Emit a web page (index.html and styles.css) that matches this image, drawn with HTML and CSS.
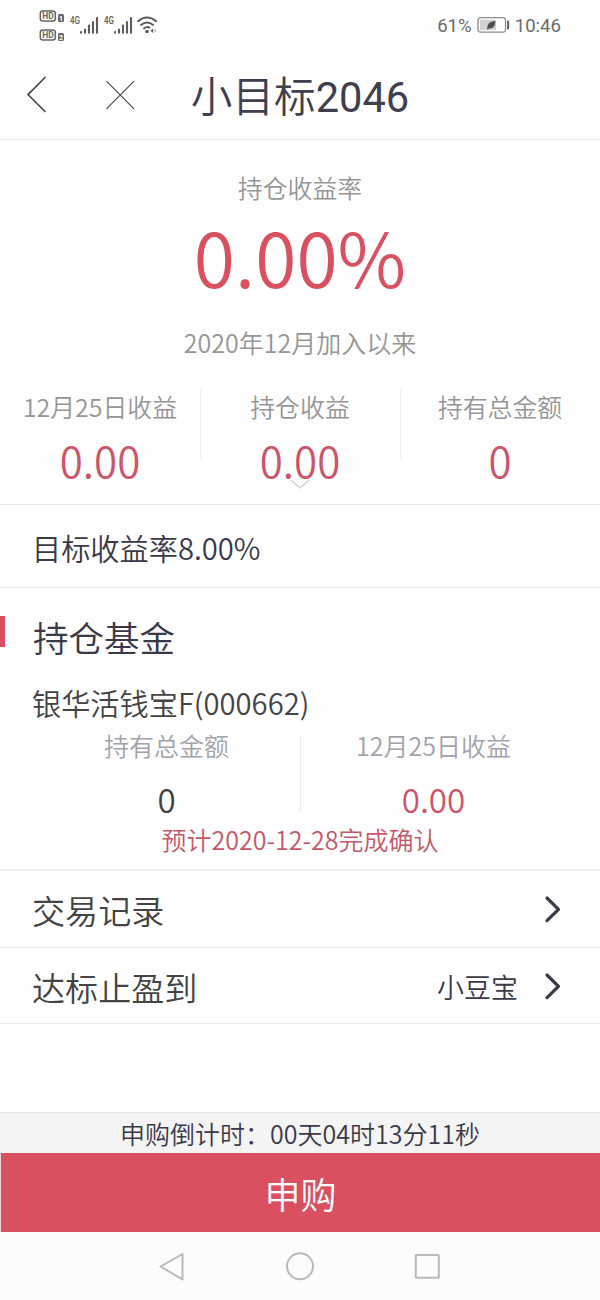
FILE: index.html
```html
<!DOCTYPE html>
<html lang="zh-CN">
<head>
<meta charset="utf-8">
<title>小目标2046</title>
<link rel="stylesheet" href="styles.css">
</head>
<body>
<div class="screen">
  <div class="status">
    <svg class="status-icons" width="122" height="34" viewBox="38 8 122 34">
      <g fill="none" stroke="#666" stroke-width="1.5">
        <rect x="40.3" y="11" width="15" height="10" rx="2.5"/>
        <rect x="40.3" y="30" width="15" height="10" rx="2.5"/>
      </g>
      <g fill="#666">
        <rect x="58" y="14" width="6" height="8" rx="1.5"/>
        <rect x="58" y="33" width="6" height="8" rx="1.5"/>
      </g>
      <g class="tiny">
        <text x="42.2" y="19.2" textLength="11.5">HD</text>
        <text x="42.2" y="38.2" textLength="11.5">HD</text>
        <text class="inverse" x="59" y="20.6">1</text>
        <text class="inverse" x="59" y="39.6">2</text>
      </g>
      <g class="net">
        <text x="70" y="24.3" textLength="10" lengthAdjust="spacingAndGlyphs">4G</text>
        <text x="104" y="24.3" textLength="10" lengthAdjust="spacingAndGlyphs">4G</text>
      </g>
      <g stroke="#5c5c5c" stroke-width="2.1" stroke-linecap="round">
        <path d="M81 32v.8M85 29.500v3.300M89 25.500v7.300M93 22v10.800M97 18v14.800"/>
        <path d="M115 32v.8M119 29.500v3.300M123 25.500v7.300M127 22v10.800M131 18v14.800"/>
      </g>
      <g fill="none" stroke="#5c5c5c" stroke-width="1.9" stroke-linecap="round">
        <path d="M138 21.2q9-7.4 18.2 0M141 25q6-4.8 12.2 0M144 28.4q3-2.2 5.5-.8"/>
      </g>
      <circle cx="147" cy="31.5" r="1.8" fill="#5c5c5c"/>
      <path d="M153.2 28.6v4.4l-2.8-2.2z" fill="#5c5c5c"/>
      <path d="M154.6 28.6v4.4l2.2-2.2z" fill="#bbb"/>
    </svg>
    <div class="status-right">
      <span class="battery-text">61%</span>
      <svg width="33" height="18" viewBox="0 0 33 18">
        <rect x="1" y="1.7" width="27.5" height="14.4" rx="2.5" fill="#fff" stroke="#8c8c8c" stroke-width="1.3"/>
        <rect x="3" y="3.7" width="16" height="10.4" fill="#d2d2d2"/>
        <path d="M10.3 13.2c-.3-5 2.2-8 8-8.2 0 5.500-2.500 8.200-6.300 7.300l-1 1.500z" fill="#505050"/>
        <rect x="30" y="4.600" width="2.200" height="8.800" rx=".8" fill="#666"/>
      </svg>
      <span class="clock">10:46</span>
    </div>
  </div>

  <header class="titlebar">
    <svg class="nav-icons" width="116" height="44" viewBox="24 73 116 44">
      <path d="M45.500 77L28 94.600 45.500 112" fill="none" stroke="#4b4b4f" stroke-width="1.700"/>
      <path d="M106.500 81.200L134 108.800M134 81.200L106.500 108.800" fill="none" stroke="#4b4b4f" stroke-width="1.200"/>
    </svg>
    <h1 class="title">小目标<span class="title-number">2046</span></h1>
  </header>

  <section class="hero">
    <div class="hero-label">持仓收益率</div>
    <div class="hero-rate">0.00%</div>
    <div class="hero-since">2020年12月加入以来</div>
    <div class="stats">
      <div class="stat"><div class="stat-label">12月25日收益</div><div class="stat-value">0.00</div></div>
      <div class="stat"><div class="stat-label">持仓收益</div><div class="stat-value">0.00</div></div>
      <div class="stat"><div class="stat-label">持有总金额</div><div class="stat-value">0</div></div>
    </div>
    <svg class="expand" width="20" height="12" viewBox="0 0 20 12"><path d="M1 1l9 8 9-8" fill="none" stroke="#cfcfd6" stroke-width="1.300"/></svg>
  </section>

  <section class="target">目标收益率8.00%</section>

  <section class="fund">
    <h2 class="fund-heading">持仓基金</h2>
    <div class="fund-name">银华活钱宝F(000662)</div>
    <div class="fund-stats">
      <div class="fund-stat"><div class="fund-label">持有总金额</div><div class="fund-value">0</div></div>
      <div class="fund-stat"><div class="fund-label">12月25日收益</div><div class="fund-value gain">0.00</div></div>
    </div>
    <div class="fund-note">预计2020-12-28完成确认</div>
  </section>

  <div class="row">
    <span class="row-title">交易记录</span>
    <svg class="chevron" width="18" height="28" viewBox="0 0 18 28"><path d="M3 3l11.500 11.300L3 25.600" fill="none" stroke="#3a3948" stroke-width="3.200" stroke-linecap="round" stroke-linejoin="round"/></svg>
  </div>
  <div class="row last">
    <span class="row-title">达标止盈到</span>
    <span class="row-value">小豆宝</span>
    <svg class="chevron" width="18" height="28" viewBox="0 0 18 28"><path d="M3 3l11.500 11.300L3 25.600" fill="none" stroke="#3a3948" stroke-width="3.200" stroke-linecap="round" stroke-linejoin="round"/></svg>
  </div>

  <footer class="bottom">
    <div class="countdown">申购倒计时：00天04时13分11秒</div>
    <div class="buy">申购</div>
    <div class="sysnav">
      <svg width="282" height="30" viewBox="159 1251 282 30" fill="none" stroke="#b9b9b9" stroke-width="2" stroke-linejoin="round">
        <path d="M182.500 1254v25.500L160.500 1266.500z"/>
        <circle cx="300" cy="1266.300" r="13"/>
        <rect x="415.800" y="1255" width="23" height="22.800" rx=".8"/>
      </svg>
    </div>
  </footer>
</div>
</body>
</html>
```

FILE: styles.css
```css
* { box-sizing: border-box; }
body {
  margin: 0;
  background: #fff;
  font-family: "Noto Sans CJK SC DemiLight", "Noto Sans CJK SC", sans-serif;
  font-weight: 350;
  color: #3a3948;
}
h1, h2 { margin: 0; font-weight: inherit; }
svg { display: block; flex: none; }

.screen {
  width: 600px;
  height: 1300px;
  display: flex;
  flex-direction: column;
  background: #fefefe;
  overflow: hidden;
}

.status {
  height: 52px;
  padding: 8px 39px 0 38px;
  display: flex;
  justify-content: space-between;
  align-items: flex-start;
}
.status-right {
  display: flex;
  align-items: center;
  height: 34px;
  gap: 5px;
  font: 18.6px/34px Roboto, sans-serif;
  color: #6c6c6c;
}
.status-right span { padding-top: 2px; }
.tiny { font: 700 8.5px Roboto, sans-serif; fill: #666; }
.tiny .inverse { font-size: 7px; fill: #fff; }
.net { font: 500 10.5px Roboto, sans-serif; fill: #5c5c5c; }

.titlebar {
  position: relative;
  height: 88px;
  border-bottom: 1px solid #e6e6e6;
  padding: 21px 0 0 24px;
}
.title {
  position: absolute;
  inset: 0;
  text-align: center;
  font-family: Roboto, "Noto Sans CJK SC DemiLight", "Noto Sans CJK SC", sans-serif;
  font-size: 41.6px;
  line-height: 91px;
  color: #403f4d;
}
.title-number { font-weight: 400; }

.hero {
  position: relative;
  height: 365px;
  padding-top: 29px;
  border-bottom: 1px solid #e6e6e6;
  text-align: center;
  color: #969696;
}
.hero-label { font-size: 24.9px; line-height: 36px; }
.hero-rate { margin-top: 6px; font-size: 75px; line-height: 90px; color: #d95161; }
.hero-since { margin-top: 23px; font-size: 25px; line-height: 36px; }
.stats { margin-top: 30px; display: grid; grid-template-columns: repeat(3, 1fr); }
.stat + .stat {
  background: linear-gradient(#ebebeb, #ebebeb) 0 0 / 1px 68px no-repeat;
}
.stat-label { font-size: 24.9px; line-height: 32px; }
.stat-value { margin-top: 16px; font-size: 42px; line-height: 44px; color: #cb566a; }
.expand { position: absolute; left: 290px; top: 339px; }

.target {
  height: 83px;
  padding-left: 32px;
  border-bottom: 1px solid #ebebeb;
  font-size: 29.2px;
  line-height: 84px;
}

.fund { height: 283px; padding-top: 28px; border-bottom: 2px solid #efefef; }
.fund-heading {
  padding-left: 33px;
  font-size: 35.5px;
  line-height: 42px;
  background: linear-gradient(#d95161, #d95161) 0 0 / 5px 31px no-repeat;
}
.fund-name { margin-top: 24px; padding-left: 32px; font-size: 29.2px; line-height: 40px; color: #444; }
.fund-stats {
  margin: 7px 33px 0;
  display: grid;
  grid-template-columns: 1fr 1fr;
  text-align: center;
}
.fund-stat + .fund-stat {
  background: linear-gradient(#e8e8e8, #e8e8e8) 0 6px / 1px 76px no-repeat;
}
.fund-label { font-size: 25px; line-height: 32px; color: #a2a2ab; }
.fund-value { margin-top: 18px; font-size: 33.2px; line-height: 40px; color: #444; }
.fund-value.gain { color: #cb566a; }
.fund-note { margin-top: 4px; text-align: center; font-size: 25px; line-height: 32px; color: #c4586a; }

.row {
  display: flex;
  align-items: center;
  height: 77px;
  padding: 0 38px 0 32px;
  border-bottom: 1px solid #ebebeb;
}
.row.last { height: 76px; }
.row-title { flex: 1; padding-top: 2px; font-size: 33.1px; line-height: 48px; color: #444; }
.row-value { padding-top: 2px; margin-right: 26px; font-size: 27px; line-height: 48px; }

.bottom { margin-top: auto; }
.countdown {
  height: 41px;
  border-top: 1px solid #e6e6e6;
  background: #f4f4f4;
  text-align: center;
  font-size: 25px;
  line-height: 40px;
}
.buy {
  height: 79px;
  border-left: 1px solid #eed5d8;
  background: #d95161;
  color: #fff;
  text-align: center;
  font-size: 36px;
  line-height: 80px;
}
.sysnav {
  height: 68px;
  padding: 19px 0 0 159px;
  background: #fcfcfc;
}
```
